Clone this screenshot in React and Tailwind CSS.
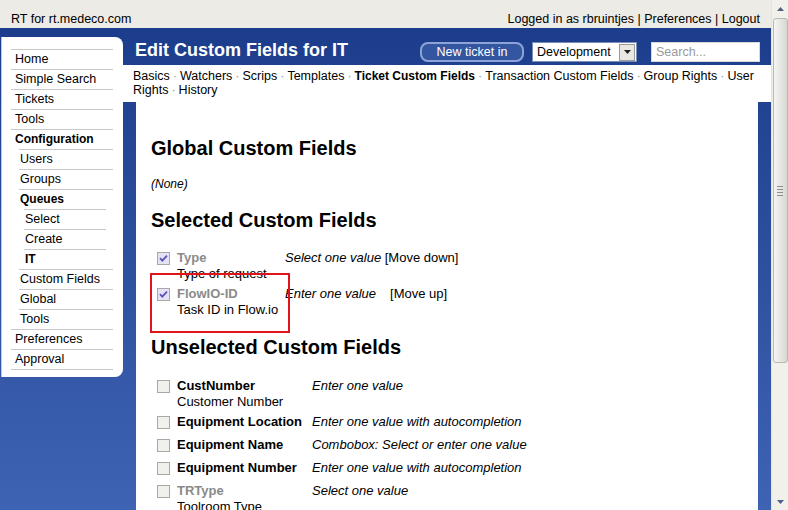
import React from 'react'

const MENU = [
  { label: 'Home', lvl: 0 },
  { label: 'Simple Search', lvl: 0 },
  { label: 'Tickets', lvl: 0 },
  { label: 'Tools', lvl: 0 },
  { label: 'Configuration', lvl: 0, bold: true },
  { label: 'Users', lvl: 1 },
  { label: 'Groups', lvl: 1 },
  { label: 'Queues', lvl: 1, bold: true },
  { label: 'Select', lvl: 2 },
  { label: 'Create', lvl: 2 },
  { label: 'IT', lvl: 2, bold: true },
  { label: 'Custom Fields', lvl: 1 },
  { label: 'Global', lvl: 1 },
  { label: 'Tools', lvl: 1 },
  { label: 'Preferences', lvl: 0 },
  { label: 'Approval', lvl: 0 },
]

const LVL = {
  0: 'pl-[4px] ml-[9px] mr-[10px]',
  1: 'pl-[1px] ml-[17px] mr-[10px]',
  2: 'pl-[1px] ml-[22px] mr-[17px]',
}

const TABS = ['Basics', 'Watchers', 'Scrips', 'Templates']

const UNSELECTED = [
  { name: 'CustNumber', desc: 'Customer Number', type: 'Enter one value' },
  { name: 'Equipment Location', type: 'Enter one value with autocompletion' },
  { name: 'Equipment Name', type: 'Combobox: Select or enter one value' },
  { name: 'Equipment Number', type: 'Enter one value with autocompletion' },
  { name: 'TRType', desc: 'Toolroom Type', type: 'Select one value', grey: true },
]

function Check({ checked }) {
  return (
    <svg width="13" height="13" viewBox="0 0 13 13" className="shrink-0">
      <rect x="0.5" y="0.5" width="12" height="12" fill={checked ? '#e4e2f4' : '#f0f0ec'} stroke="#a9a9a2" />
      {checked && <path d="M3 6.2 L5.3 8.6 L10 3.6" fill="none" stroke="#5a52b8" strokeWidth="1.8" />}
    </svg>
  )
}

function Dot() {
  return <span className="text-[#999] mx-[3px]">·</span>
}

export default function App() {
  return (
    <div className="flex w-[788px] h-[510px] overflow-hidden font-['Liberation_Sans',Arial,sans-serif] text-[13px] text-black">
      <div className="flex flex-col w-[771px]">
        <div className="h-[28px] shrink-0 bg-[#ecebe5] flex items-end justify-between pb-[1px] pl-[11px] pr-[11px] leading-[16px] text-[12.5px]">
          <span>RT for rt.medeco.com</span>
          <span>Logged in as rbruintjes | Preferences | Logout</span>
        </div>

        <div className="flex flex-1 min-h-0 bg-gradient-to-b from-[#1c3d8c] to-[#3f63b3]">
          <div className="w-[123px] shrink-0 pt-[9px]">
            <div className="ml-[1px] h-[340px] bg-white border-l border-[#c8c8c8] rounded-r-[8px] pt-[12px] text-[12.5px]">
              {MENU.map((m, i) => (
                <div
                  key={i}
                  className={`h-[20px] leading-[19px] border-t border-[#c9c9c9] ${LVL[m.lvl]} ${m.bold ? 'font-bold text-[12px]' : ''}`}
                >
                  {m.label}
                </div>
              ))}
              <div className={`border-t border-[#c9c9c9] ${LVL[0]}`} />
            </div>
          </div>

          <div className="flex flex-col flex-1 min-w-0">
            <div className="h-[37px] shrink-0 flex items-center pl-[12px] pr-[11px] pt-[10px]">
              <span className="text-white font-bold text-[18px] pb-[2px]">Edit Custom Fields for IT</span>
              <div className="ml-auto flex items-center mt-[1px] text-[12.5px]">
                <div className="w-[104px] h-[20px] rounded-[8px] border-2 border-[#8ea4d6] bg-[#34559f] text-white leading-[16px] text-center">
                  New ticket in
                </div>
                <div className="ml-[8px] w-[105px] h-[20px] bg-white border border-[#7a8fb8] flex items-center pl-[4px]">
                  <span className="flex-1">Development</span>
                  <span className="w-[16px] h-[17px] mr-[1px] bg-[#e9e8e2] border border-[#9a9a9a] flex items-center justify-center">
                    <svg width="7" height="4" viewBox="0 0 7 4"><path d="M0 0 L7 0 L3.5 4 Z" fill="#222" /></svg>
                  </span>
                </div>
                <div className="ml-[14px] w-[109px] h-[20px] bg-white border border-[#d8d8d8] pl-[4px] leading-[18px] text-[#9a9a9a]">
                  Search...
                </div>
              </div>
            </div>

            <div className="h-[37px] shrink-0 bg-white pl-[10px] pt-[4px] leading-[14px] text-[12.5px]">
              <div className="whitespace-nowrap">
                {TABS.map((t) => (
                  <span key={t}>{t}<Dot /></span>
                ))}
                <span className="font-bold text-[12px]">Ticket Custom Fields</span><Dot />
                Transaction Custom Fields<Dot />
                Group Rights<Dot />
                User
              </div>
              <div className="whitespace-nowrap">Rights<Dot />History</div>
            </div>

            <div className="flex-1 min-h-0 px-[13px]">
              <div className="relative h-full bg-white pl-[15px] overflow-hidden">
                <h2 className="mt-[34px] text-[20px] font-bold leading-[24px]">Global Custom Fields</h2>
                <div className="mt-[16px] italic text-[12px] leading-[16px]">(None)</div>
                <h2 className="mt-[16px] text-[20px] font-bold leading-[24px]">Selected Custom Fields</h2>

                <div className="mt-[18px] pl-[6px]">
                  <div className="flex h-[36px] leading-[16px]">
                    <div className="pt-[2px] w-[20px]"><Check checked /></div>
                    <div className="w-[108px]">
                      <div className="font-bold text-[#8a8a8a]">Type</div>
                      <div>Type of request</div>
                    </div>
                    <div>
                      <span className="italic">Select one value</span> [Move down]
                    </div>
                  </div>
                  <div className="flex h-[49px] leading-[16px]">
                    <div className="pt-[2px] w-[20px]"><Check checked /></div>
                    <div className="w-[108px]">
                      <div className="font-bold text-[#8a8a8a]">FlowIO-ID</div>
                      <div>Task ID in Flow.io</div>
                    </div>
                    <div>
                      <span className="italic">Enter one value</span>
                      <span className="ml-[14px]">[Move up]</span>
                    </div>
                  </div>
                </div>

                <h2 className="text-[20px] font-bold leading-[24px]">Unselected Custom Fields</h2>

                <div className="mt-[19px] pl-[6px]">
                  {UNSELECTED.map((r) => (
                    <div key={r.name} className={`flex leading-[16px] ${r.desc ? 'h-[36px]' : 'h-[23px]'}`}>
                      <div className="pt-[2px] w-[20px]"><Check /></div>
                      <div className="w-[135px]">
                        <div className={`font-bold ${r.grey ? 'text-[#8a8a8a]' : ''}`}>{r.name}</div>
                        {r.desc && <div>{r.desc}</div>}
                      </div>
                      <div className="italic">{r.type}</div>
                    </div>
                  ))}
                </div>

                <div className="absolute left-[14px] top-[171px] w-[140px] h-[60px] border-2 border-[#e2141b]" />
              </div>
            </div>
          </div>
        </div>
      </div>

      <div className="w-[17px] shrink-0 bg-[#f1f0ea] flex flex-col items-center border-l border-[#e4e3dc]">
        <div className="h-[17px] flex items-center justify-center">
          <svg width="7" height="4" viewBox="0 0 7 4"><path d="M0 4 L7 4 L3.5 0 Z" fill="#4d6185" /></svg>
        </div>
        <div className="w-[15px] h-[345px] mt-[1px] rounded-[3px] border border-[#b8b8b4] bg-gradient-to-r from-[#f4f4f2] via-[#e6e6e3] to-[#d6d6d2] flex items-center justify-center">
          <div className="flex flex-col gap-[2px]">
            <div className="w-[6px] h-px bg-[#8e8e8a]" />
            <div className="w-[6px] h-px bg-[#8e8e8a]" />
            <div className="w-[6px] h-px bg-[#8e8e8a]" />
            <div className="w-[6px] h-px bg-[#8e8e8a]" />
          </div>
        </div>
        <div className="mt-auto h-[17px] flex items-center justify-center">
          <svg width="7" height="4" viewBox="0 0 7 4"><path d="M0 0 L7 0 L3.5 4 Z" fill="#4d6185" /></svg>
        </div>
      </div>
    </div>
  )
}
